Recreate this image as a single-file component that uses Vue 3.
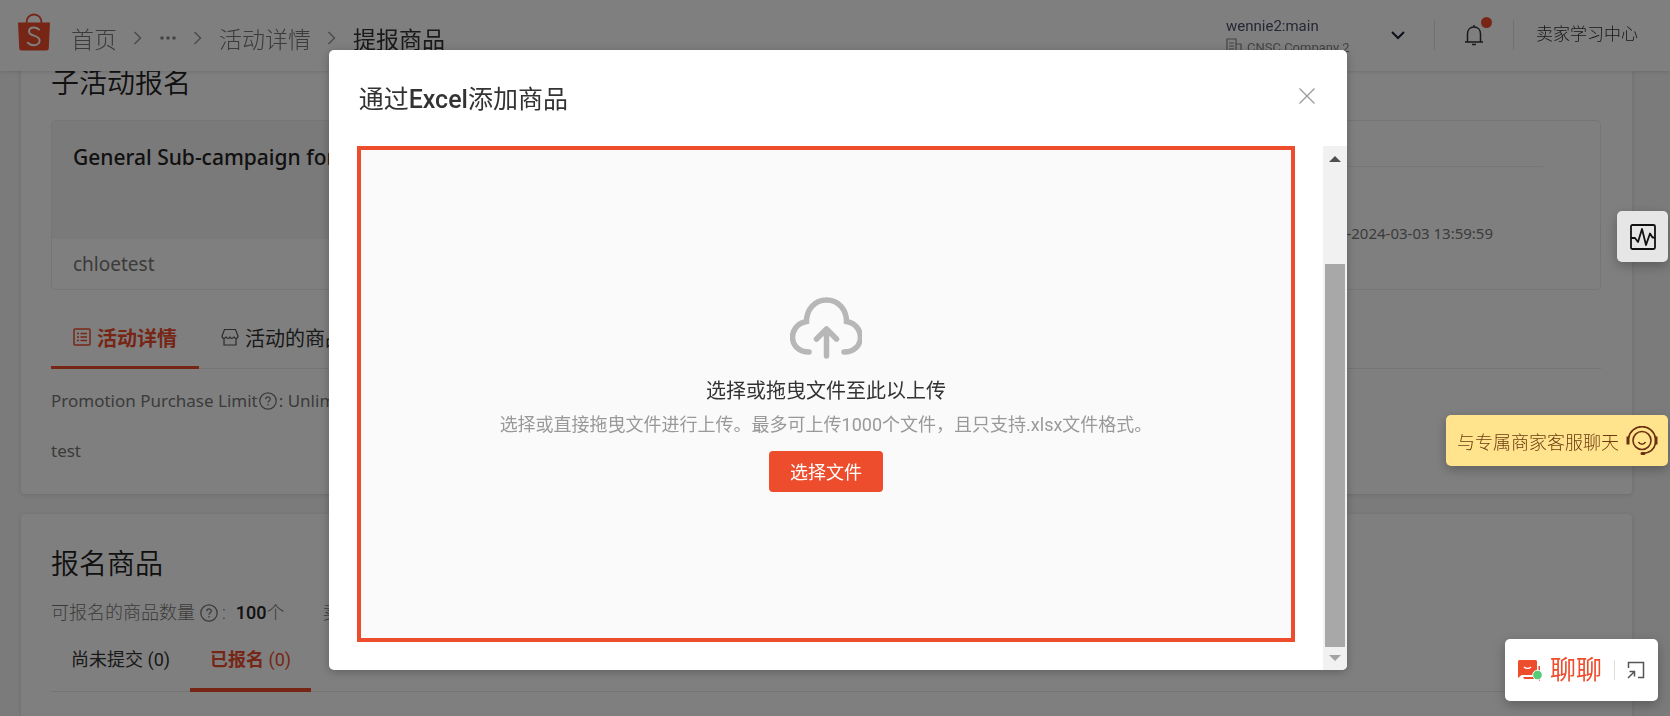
<template>
  <div class="page">
    <header class="topbar">
      <a class="topbar__logo" href="#" aria-label="Shopee">
        <svg width="34" height="38" viewBox="0 0 34 38">
          <path d="M9.500 10C9.500 5 12.500 1.500 17 1.500S24.500 5 24.500 10" fill="none" stroke="#ee4d2d" stroke-width="2" />
          <path d="M1 9.500h32l-1.200 25.500a2.500 2.500 0 0 1-2.500 2.500H4.700a2.500 2.500 0 0 1-2.500-2.500z" fill="#ee4d2d" />
          <path
            d="M22 16.500c-1.500-1.300-3.200-2-5-2-2.900 0-5 1.500-5 3.900 0 5.200 10.600 3.300 10.600 9 0 2.800-2.400 4.800-5.600 4.800-2.300 0-4.500-.9-6.200-2.500"
            fill="none"
            stroke="#fff"
            stroke-width="2"
            stroke-linecap="round"
          />
        </svg>
      </a>
      <nav class="crumbs">
        <template v-for="(crumb, i) in crumbs" :key="crumb">
          <svg v-if="i" class="crumbs__sep" width="10" height="16" viewBox="0 0 10 16">
            <path d="M1.500 2l6 6-6 6" fill="none" stroke="#999" stroke-width="1.500" />
          </svg>
          <button v-if="crumb === '...'" class="crumbs__more" type="button" title="More">
            <svg width="18" height="6" viewBox="0 0 18 6" fill="#888">
              <circle cx="3" cy="3" r="1.800" />
              <circle cx="9" cy="3" r="1.800" />
              <circle cx="15" cy="3" r="1.800" />
            </svg>
          </button>
          <span v-else-if="i === crumbs.length - 1" class="crumbs__current">{{ crumb }}</span>
          <a v-else class="crumbs__link" href="#">{{ crumb }}</a>
        </template>
      </nav>
      <button class="account" type="button">
        <span class="account__text">
          <span class="account__name">wennie2:main</span>
          <span class="account__company">
            <svg width="16" height="18" viewBox="0 0 16 18" fill="none" stroke="#888" stroke-width="1.200">
              <path d="M1 17V1h9v16M10 6h5v11M0 17h16M3 5h5M3 8h5M3 11h5" />
            </svg>
            CNSC Company 2
          </span>
        </span>
        <svg width="16" height="10" viewBox="0 0 16 10">
          <path d="M2 2l6 6 6-6" fill="none" stroke="#1a2138" stroke-width="2" />
        </svg>
      </button>
      <button class="bell" type="button" title="Notifications">
        <svg width="20" height="22" viewBox="0 0 20 22" fill="none" stroke="#333" stroke-width="1.500">
          <path d="M3.500 18V10c0-4 2.500-7 6.500-7s6.500 3 6.500 7v8M1 18h18M10 1v2" />
          <path d="M8 20.500h4" />
        </svg>
        <span class="bell__dot"></span>
      </button>
      <a class="topbar__learn" href="#">卖家学习中心</a>
    </header>

    <main class="content">
      <section class="card">
        <h2 class="card__title">子活动报名</h2>
        <div class="campaign">
          <div class="campaign__left">
            <h3 class="campaign__name">General Sub-campaign for products</h3>
            <p class="campaign__shop">chloetest</p>
          </div>
          <div class="campaign__right">
            <div class="campaign__row"></div>
            <p class="campaign__time">2024-02-28 14:00:00-2024-03-03 13:59:59</p>
          </div>
        </div>
        <div class="tabs">
          <button class="tabs__item tabs__item--active" type="button">
            <svg width="18" height="18" viewBox="0 0 18 18" fill="none" stroke="currentColor" stroke-width="1.500">
              <rect x="1" y="1" width="16" height="16" rx="1" />
              <path d="M4 5.500h2M7.500 5.500H14M4 9h2M7.500 9H14M4 12.500h2M7.500 12.500H14" />
            </svg>
            活动详情
          </button>
          <button class="tabs__item" type="button">
            <svg width="18" height="18" viewBox="0 0 18 18" fill="none" stroke="#555" stroke-width="1.200">
              <path d="M3.500 1.500h11L17 8c0 3-3.500 3-4 .5-.5 2.500-4 2.500-4 0 0 2.500-3.500 2.500-4 0C4.500 11 1 11 1 8zM3 11v6h12v-6" />
            </svg>
            活动的商品
          </button>
        </div>
        <p class="detail">
          Promotion Purchase Limit<svg class="help" width="18" height="18" viewBox="0 0 18 18" fill="none" stroke="currentColor" stroke-width="1.300">
            <circle cx="9" cy="9" r="8.200" />
            <path d="M6.800 7.200c0-3 4.500-2.900 4.500-.2 0 1.800-2.300 1.700-2.300 3.700M9 12v1.500" /></svg>: Unlimited
        </p>
        <p class="detail detail--last">test</p>
      </section>

      <section class="card card--grow">
        <h2 class="card__title">报名商品</h2>
        <p class="quota">
          <span>可报名的商品数量</span>
          <svg class="help" width="18" height="18" viewBox="0 0 18 18" fill="none" stroke="currentColor" stroke-width="1.300">
            <circle cx="9" cy="9" r="8.200" />
            <path d="M6.800 7.200c0-3 4.500-2.900 4.500-.2 0 1.800-2.300 1.700-2.300 3.700M9 12v1.500" />
          </svg>
          <span class="quota__colon">:</span>
          <span><b>100</b>个</span>
          <span class="quota__next">卖家已报名</span>
        </p>
        <div class="tabs tabs--small">
          <button
            v-for="tab in productTabs"
            :key="tab.label"
            class="tabs__item"
            :class="{ 'tabs__item--active': tab.label === activeTab }"
            type="button"
            @click="activeTab = tab.label"
          >
            <span>{{ tab.label }} <span class="tabs__count">({{ tab.count }})</span></span>
          </button>
        </div>
      </section>
    </main>

    <div v-if="showModal" class="modal">
      <div class="modal__backdrop" @click="showModal = false"></div>
      <div class="modal__box" role="dialog" aria-labelledby="modal-title">
        <div class="modal__head">
          <h2 id="modal-title" class="modal__title">通过<b>Excel</b>添加商品</h2>
          <button class="modal__close" type="button" title="Close" @click="showModal = false">
            <svg width="18" height="18" viewBox="0 0 18 18">
              <path d="M1.500 1.500l15 15M16.500 1.500l-15 15" stroke="#999" stroke-width="1.300" />
            </svg>
          </button>
        </div>
        <div class="modal__body">
          <div class="upload" @dragover.prevent @drop.prevent>
            <svg width="72" height="62" viewBox="0 0 72 62" fill="none" stroke="#b7b7b7" stroke-width="5.500" stroke-linecap="round">
              <path d="M19 55C-2 55-3 28 16.500 24.500 16.500 12 25 3 36.500 3s20 9 20 21.500C76 28 75 55 54 55" />
              <path d="M36.500 59V33M26.500 42L36.500 32l10 10" stroke-linejoin="round" />
            </svg>
            <p class="upload__title">选择或拖曳文件至此以上传</p>
            <p class="upload__hint">选择或直接拖曳文件进行上传。最多可上传1000个文件，且只支持.xlsx文件格式。</p>
            <button class="upload__button" type="button" @click="fileInput.click()">选择文件</button>
            <input ref="fileInput" type="file" accept=".xlsx" aria-label="选择文件" hidden />
          </div>
          <div class="scrollbar">
            <svg width="12" height="6" viewBox="0 0 12 6"><path d="M0 6l6-6 6 6z" fill="#505050" /></svg>
            <div class="scrollbar__thumb"></div>
            <svg width="12" height="6" viewBox="0 0 12 6"><path d="M0 0l6 6 6-6z" fill="#a3a3a3" /></svg>
          </div>
        </div>
      </div>
    </div>

    <button class="float float--monitor" type="button" title="Monitor">
      <svg width="26" height="26" viewBox="0 0 26 26" fill="none" stroke="#111" stroke-width="1.800" stroke-linejoin="round">
        <rect x="1" y="1" width="24" height="24" rx="1.500" />
        <path d="M1 14h4l3 4 4-13 4 16 4-11.500 2.500 4H25" />
      </svg>
    </button>
    <button class="float float--service" type="button">
      与专属商家客服聊天
      <svg width="32" height="30" viewBox="0 0 32 30" fill="none" stroke="#6b2f10">
        <path d="M2.500 12A13.700 13.700 0 0 1 29.500 12M29.500 17.500C28 24 23.500 27 17 27.500" stroke-width="1.600" />
        <circle cx="16" cy="14.500" r="9" stroke-width="1.600" />
        <path d="M12.500 16c1.500 3 5.500 3 7 0" stroke-width="1.600" />
        <path d="M2 10.500v8M30 10.500v8" stroke-width="3" />
        <path d="M16 27.500h2" stroke-width="3" stroke-linecap="round" />
      </svg>
    </button>
    <div class="float float--chat">
      <button class="chat__open" type="button">
        <svg width="26" height="24" viewBox="0 0 26 24">
          <path d="M2.500 2h16A1.500 1.500 0 0 1 20 3.500V17H4.500L1 20V3.500A1.500 1.500 0 0 1 2.500 2z" fill="#ee4d2d" />
          <path d="M21.500 8h1.500v15l-3-2H8a1.500 1.500 0 0 1-1.500-2h15z" fill="#ee4d2d" />
          <path d="M7 9c2 1.800 5 1.800 7 0" fill="none" stroke="#fff" stroke-width="1.500" />
          <circle cx="20.500" cy="17" r="4.800" fill="#55cc77" stroke="#fff" />
        </svg>
        聊聊
      </button>
      <button class="chat__pop" type="button" title="Expand">
        <svg width="18" height="18" viewBox="0 0 18 18" fill="none" stroke="#555" stroke-width="1.500">
          <path d="M1.500 7V1.500h15v15H11" />
          <path d="M1 17l6-6M2.500 10.500h5v5" />
        </svg>
      </button>
    </div>
  </div>
</template>

<script setup>
import { ref } from "vue";

const crumbs = ["首页", "...", "活动详情", "提报商品"];

const productTabs = [
  { label: "尚未提交", count: 0 },
  { label: "已报名", count: 0 },
];
const activeTab = ref("已报名");

const showModal = ref(true);
const fileInput = ref(null);
</script>

<style>
body {
  overflow: hidden;
  background-color: #f6f6f6;
}
</style>

<style scoped>
.page {
  display: flex;
  flex-direction: column;
  height: 100vh;
  font-family: Roboto, "Noto Sans CJK SC", sans-serif;
  font-size: 18px;
  color: #333;
}

.page * {
  box-sizing: border-box;
}

h2,
h3,
p {
  margin: 0;
  font-weight: inherit;
}

button {
  padding: 0;
  border: none;
  background: none;
  color: inherit;
  font: inherit;
  cursor: pointer;
}

a {
  color: inherit;
  text-decoration: none;
}

svg {
  display: block;
  flex: none;
}

.topbar {
  position: fixed;
  top: 0;
  left: 0;
  right: 0;
  z-index: 10;
  display: flex;
  align-items: flex-start;
  height: 71px;
  padding: 13px 32px 0 17px;
  background-color: #fff;
  box-shadow: 0 1px 4px rgba(0, 0, 0, 0.12);
}

.crumbs {
  display: flex;
  align-items: center;
  gap: 16px;
  height: 50px;
  margin-left: 20px;
  margin-right: auto;
  font-size: 23px;
  color: #999;
}

.crumbs__link {
  font-weight: 300;
  color: #777;
}

.crumbs__current {
  color: #333;
}

.account {
  display: flex;
  align-items: center;
  justify-content: space-between;
  width: 180px;
  height: 44px;
  text-align: left;
}

.account__text {
  display: flex;
  flex-direction: column;
  gap: 2px;
  line-height: 20px;
  padding-top: 4px;
}

.account__name {
  font-size: 15px;
  color: #4b5168;
}

.account__company {
  display: flex;
  gap: 5px;
  font-size: 13px;
  color: #888;
}

.bell {
  position: relative;
  display: flex;
  align-items: center;
  justify-content: center;
  width: 80px;
  height: 30px;
  margin: 7px 22px 0 28px;
  border: solid #e0e0e0;
  border-width: 0 1px;
}

.bell__dot {
  position: absolute;
  top: -3px;
  left: 46px;
  width: 11px;
  height: 11px;
  border-radius: 50%;
  background-color: #ee4d2d;
}

.topbar__learn {
  margin-top: 9px;
  font-size: 17px;
  font-weight: 300;
  line-height: 24px;
}

.content {
  display: flex;
  flex-direction: column;
  gap: 20px;
  height: 100vh;
  padding: 33px 38px 0 21px;
  overflow: hidden;
}

.card {
  flex: none;
  padding: 31px 31px 31px 30px;
  border-radius: 4px;
  background-color: #fff;
  box-shadow: 0 1px 4px rgba(0, 0, 0, 0.12);
}

.card--grow {
  flex: 1 0 auto;
}

.card__title {
  font-size: 28px;
  font-weight: 350;
  line-height: 40px;
  color: #222;
}

.campaign {
  display: grid;
  grid-template-columns: 1fr 1fr;
  height: 170px;
  margin-top: 16px;
  border: 1px solid #ebebeb;
  border-radius: 4px;
  font-family: "Noto Sans", "Noto Sans CJK SC", sans-serif;
}

.campaign__left {
  display: flex;
  flex-direction: column;
}

.campaign__name {
  height: 118px;
  padding: 22px 21px;
  background-color: #f5f5f5;
  font-size: 21px;
  font-weight: 500;
  line-height: 28px;
  color: #222;
}

.campaign__shop {
  padding: 11px 21px;
  font-size: 19px;
  line-height: 28px;
  color: #777;
}

.campaign__right {
  padding-right: 57px;
}

.campaign__row {
  height: 46px;
  border-bottom: 1px solid #efefef;
}

.campaign__time {
  padding: 54px 50px 0 0;
  font-size: 15px;
  line-height: 24px;
  text-align: right;
  color: #777;
}

.tabs {
  display: flex;
  height: 61px;
  margin-top: 18px;
  border-bottom: 1px solid #e8e8e8;
  font-size: 20px;
}

.tabs__item {
  display: flex;
  align-items: center;
  gap: 6px;
  height: 61px;
  padding: 0 22px;
  border-bottom: 3px solid transparent;
  white-space: nowrap;
}

.tabs__item--active {
  border-bottom-color: #ee4d2d;
  font-weight: 700;
  color: #ee4d2d;
}

.tabs--small {
  height: 65px;
  margin-top: 0;
  font-size: 18px;
}

.tabs--small .tabs__item {
  height: 65px;
  padding: 0 20px;
  border-bottom-width: 4px;
}

.tabs__count {
  font-weight: 400;
}

.detail {
  display: flex;
  align-items: center;
  margin-top: 20px;
  font-family: "Noto Sans", "Noto Sans CJK SC", sans-serif;
  font-size: 17px;
  line-height: 24px;
  color: #777;
}

.detail .help {
  margin: 0 2px 0 1px;
}

.detail--last {
  margin-top: 26px;
}

.quota {
  display: flex;
  align-items: center;
  margin-top: 14px;
  font-weight: 300;
  line-height: 28px;
  color: #777;
}

.quota .help {
  margin: 0 4px 0 5px;
}

.quota__colon {
  margin-right: 10px;
}

.quota b {
  font-weight: 500;
  color: #222;
}

.quota__next {
  margin-left: 38px;
}

.modal {
  position: fixed;
  inset: 0;
  z-index: 100;
  display: flex;
  align-items: flex-start;
  justify-content: center;
  padding-top: 50px;
}

.modal__backdrop {
  position: fixed;
  inset: 0;
  z-index: 1;
  background-color: rgba(0, 0, 0, 0.5);
}

.modal__box {
  z-index: 2;
  width: 61%;
  margin-right: -6px;
  border-radius: 5px;
  background-color: #fff;
  box-shadow: 0 2px 10px rgba(0, 0, 0, 0.25);
  overflow: hidden;
}

.modal__head {
  display: flex;
  justify-content: space-between;
  align-items: center;
  height: 96px;
  padding: 0 31px 0 30px;
}

.modal__title {
  padding-top: 4px;
  font-size: 25px;
  line-height: 36px;
}

.modal__title b {
  font-weight: 500;
}

.modal__close {
  margin-bottom: 4px;
}

.modal__body {
  display: flex;
}

.upload {
  flex: 1;
  display: flex;
  flex-direction: column;
  align-items: center;
  justify-content: center;
  min-height: 496px;
  margin: 0 28px 28px;
  border: 4px solid #ee4d2d;
  background-color: #fafafa;
}

.upload__title {
  margin-top: 16px;
  font-size: 20px;
  line-height: 32px;
}

.upload__hint {
  margin-top: 4px;
  line-height: 28px;
  color: #999;
}

.upload__button {
  height: 41px;
  margin-top: 12px;
  padding: 0 21px;
  border-radius: 4px;
  background-color: #ee4d2d;
  color: #fff;
}

.scrollbar {
  display: flex;
  flex-direction: column;
  align-items: center;
  width: 24px;
  padding: 10px 2px 9px;
  background-color: #f1f1f1;
}

.scrollbar__thumb {
  align-self: stretch;
  flex: 1;
  margin: 102px 0 8px;
  background-color: #a8a8a8;
}

.float {
  position: fixed;
  z-index: 200;
  display: flex;
  align-items: center;
  border-radius: 5px;
  box-shadow: 0 4px 12px rgba(0, 0, 0, 0.25);
}

.float--monitor {
  top: 211px;
  right: 2px;
  justify-content: center;
  width: 51px;
  height: 51px;
  background-color: #e6e6e6;
}

.float--service {
  top: 415px;
  right: 2px;
  gap: 7px;
  height: 51px;
  padding: 0 10px 0 11px;
  background-color: #ffe38d;
  font-weight: 300;
  color: #6b3a10;
}

.float--chat {
  right: 12px;
  bottom: 15px;
  height: 62px;
  padding: 0 13px 0 12px;
  background-color: #fff;
}

.chat__open {
  display: flex;
  align-items: center;
  gap: 7px;
  font-size: 26px;
  line-height: 36px;
  color: #ee4d2d;
}

.chat__pop {
  height: 20px;
  margin-left: 12px;
  padding-left: 12px;
  border-left: 1px solid #ddd;
}
</style>
